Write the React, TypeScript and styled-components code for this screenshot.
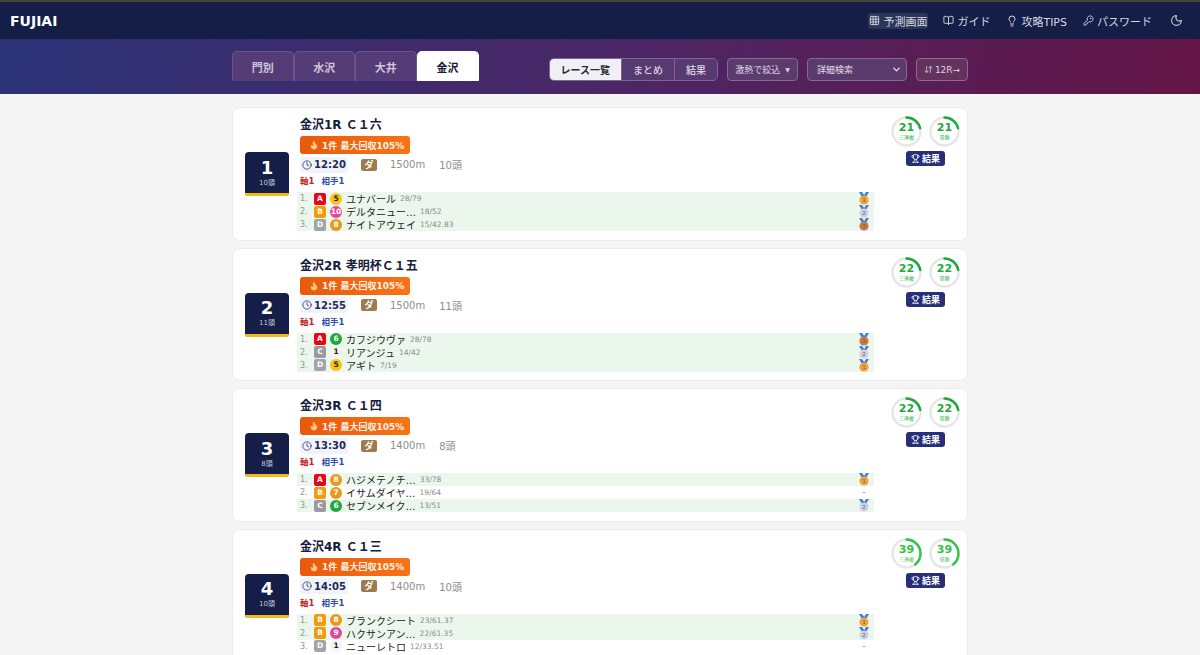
import styled, { createGlobalStyle } from "styled-components";
import { ArrowDownUp, BookOpen, ChevronDown, Clock, Flame, Grid3x3, KeyRound, Lightbulb, Moon, Trophy } from "lucide-react";

const FONT = `"DejaVu Sans", "Noto Sans CJK JP", sans-serif`;

const GlobalStyle = createGlobalStyle`
  html, body {
    margin: 0;
    height: 655px;
    overflow: hidden;
    background: #f5f5f5;
    font-family: ${FONT};
  }
`;

interface Entry {
  no: number;
  rank: string;
  gate: number;
  name: string;
  stat: string;
  medal?: number;
}

interface Race {
  no: number;
  title: string;
  time: string;
  distance: string;
  heads: number;
  score: number;
  entries: Entry[];
}

const races: Race[] = [
  {
    no: 1,
    title: "金沢1R Ｃ１六",
    time: "12:20",
    distance: "1500m",
    heads: 10,
    score: 21,
    entries: [
      { no: 1, rank: "A", gate: 5, name: "ユナバール", stat: "28/79", medal: 1 },
      { no: 2, rank: "B", gate: 10, name: "デルタニュー…", stat: "18/52", medal: 2 },
      { no: 3, rank: "D", gate: 8, name: "ナイトアウェイ", stat: "15/42.83", medal: 3 },
    ],
  },
  {
    no: 2,
    title: "金沢2R 孝明杯Ｃ１五",
    time: "12:55",
    distance: "1500m",
    heads: 11,
    score: 22,
    entries: [
      { no: 1, rank: "A", gate: 6, name: "カフジウヴァ", stat: "28/78", medal: 3 },
      { no: 2, rank: "C", gate: 1, name: "リアンジュ", stat: "14/42", medal: 2 },
      { no: 3, rank: "D", gate: 5, name: "アギト", stat: "7/19", medal: 1 },
    ],
  },
  {
    no: 3,
    title: "金沢3R Ｃ１四",
    time: "13:30",
    distance: "1400m",
    heads: 8,
    score: 22,
    entries: [
      { no: 1, rank: "A", gate: 8, name: "ハジメテノチ…", stat: "33/78", medal: 1 },
      { no: 2, rank: "B", gate: 7, name: "イサムダイヤ…", stat: "19/64" },
      { no: 3, rank: "C", gate: 6, name: "セブンメイク…", stat: "13/51", medal: 2 },
    ],
  },
  {
    no: 4,
    title: "金沢4R Ｃ１三",
    time: "14:05",
    distance: "1400m",
    heads: 10,
    score: 39,
    entries: [
      { no: 1, rank: "B", gate: 8, name: "ブランクシート", stat: "23/61.37", medal: 1 },
      { no: 2, rank: "B", gate: 9, name: "ハクサンアン…", stat: "22/61.35", medal: 2 },
      { no: 3, rank: "D", gate: 1, name: "ニューレトロ", stat: "12/33.51" },
    ],
  },
];

const RANK_COLORS: Record<string, string> = {
  A: "#e8071a",
  B: "#f59a0c",
  C: "#9a9a9e",
  D: "#a3a3a8",
};

const GATE_COLORS: Record<number, [string, string]> = {
  1: ["#f4f4f4", "#222"],
  5: ["#f5c518", "#222"],
  6: ["#1fa83c", "#fff"],
  7: ["#e8981a", "#fff"],
  8: ["#e8981a", "#fff"],
  9: ["#e0489a", "#fff"],
  10: ["#e0489a", "#fff"],
};

const MEDAL_COLORS: Record<number, string> = {
  1: "#f2a33a",
  2: "#cfcfe8",
  3: "#c67a45",
};

const Medal = ({ rank }: { rank: number }) => (
  <svg width="10" height="13" viewBox="0 0 10 13">
    <path d="M0 0 L3 0 L5.2 3 L7 0 L10 0 L7 5 L3 5 Z" fill="#3f7fd6" />
    <circle cx="5" cy="8" r="4.6" fill={MEDAL_COLORS[rank]} />
    <text x="5" y="10" fontSize="5.5" textAnchor="middle" fill="#6b5a4a">
      {rank}
    </text>
  </svg>
);

const Gauge = ({ value, label }: { value: number; label: string }) => {
  const radius = 14;
  const length = 2 * Math.PI * radius;
  const color = value >= 30 ? "#34c23f" : "#1ea83a";
  return (
    <GaugeBox>
      <svg width="31" height="31" viewBox="0 0 31 31">
        <circle cx="15.5" cy="15.5" r={radius} fill="none" stroke="#e6e6e6" strokeWidth="2.4" />
        <circle
          cx="15.5"
          cy="15.5"
          r={radius}
          fill="none"
          stroke={color}
          strokeWidth="2.4"
          strokeLinecap="round"
          strokeDasharray={`${(length * value) / 100} ${length}`}
          transform="rotate(-90 15.5 15.5)"
        />
      </svg>
      <GaugeValue $color={color}>{value}</GaugeValue>
      <GaugeLabel $color={color}>{label}</GaugeLabel>
    </GaugeBox>
  );
};

const RaceCard = ({ race }: { race: Race }) => (
  <Card>
    <NumberBlock>
      <NumberValue>{race.no}</NumberValue>
      <NumberHeads>{race.heads}頭</NumberHeads>
    </NumberBlock>
    <Main>
      <Title>{race.title}</Title>
      <Banner>
        <Flame size={10} fill="#ffd08a" stroke="#ffb266" />
        <span>1件 最大回収105%</span>
      </Banner>
      <InfoRow>
        <TimePill>
          <Clock size={10} strokeWidth={1.8} />
          {race.time}
        </TimePill>
        <Surface>ダ</Surface>
        <Meta>{race.distance}</Meta>
        <Meta>{race.heads}頭</Meta>
      </InfoRow>
      <Bets>
        <Axis>軸1</Axis>
        <Partner>相手1</Partner>
      </Bets>
      <Entries>
        {race.entries.map((entry) => (
          <EntryRow key={entry.no} $hit={entry.medal !== undefined}>
            <EntryNo>{entry.no}.</EntryNo>
            <Rank $color={RANK_COLORS[entry.rank]}>{entry.rank}</Rank>
            <GateBall $bg={GATE_COLORS[entry.gate][0]} $fg={GATE_COLORS[entry.gate][1]}>
              {entry.gate}
            </GateBall>
            <HorseName>{entry.name}</HorseName>
            <Stat>{entry.stat}</Stat>
            <MedalSlot>{entry.medal ? <Medal rank={entry.medal} /> : "-"}</MedalSlot>
          </EntryRow>
        ))}
      </Entries>
    </Main>
    <Side>
      <Gauges>
        <Gauge value={race.score} label="三連複" />
        <Gauge value={race.score} label="単勝" />
      </Gauges>
      <ResultButton>
        <Trophy size={9} strokeWidth={2.2} />
        結果
      </ResultButton>
    </Side>
  </Card>
);

export default function App() {
  return (
    <>
      <GlobalStyle />
      <TopBar>
        <Logo>FUJIAI</Logo>
        <Nav>
          <NavItem $active>
            <Grid3x3 size={11} />
            予測画面
          </NavItem>
          <NavItem>
            <BookOpen size={11} />
            ガイド
          </NavItem>
          <NavItem>
            <Lightbulb size={12} />
            攻略TIPS
          </NavItem>
          <NavItem>
            <KeyRound size={11} />
            パスワード
          </NavItem>
          <ThemeButton>
            <Moon size={13} />
          </ThemeButton>
        </Nav>
      </TopBar>
      <Hero>
        <HeroInner>
          <Tabs>
            <Tab>門別</Tab>
            <Tab>水沢</Tab>
            <Tab>大井</Tab>
            <Tab $active>金沢</Tab>
          </Tabs>
          <Controls>
            <Segments>
              <Segment $active>レース一覧</Segment>
              <Segment>まとめ</Segment>
              <Segment>結果</Segment>
            </Segments>
            <FilterButton>
              激熱で絞込 <small>▼</small>
            </FilterButton>
            <SearchSelect>
              詳細検索
              <ChevronDown size={11} strokeWidth={3} />
            </SearchSelect>
            <SortButton>
              <ArrowDownUp size={9} />
              12R→
            </SortButton>
          </Controls>
        </HeroInner>
      </Hero>
      <List>
        {races.map((race) => (
          <RaceCard key={race.no} race={race} />
        ))}
      </List>
    </>
  );
}

const TopBar = styled.header`
  box-sizing: border-box;
  height: 39px;
  border-top: 2px solid #45453f;
  background: #141e46;
  display: flex;
  align-items: center;
  justify-content: space-between;
  padding: 0 17px 0 10px;
`;

const Logo = styled.div`
  color: #fff;
  font-size: 14px;
  font-weight: 700;
`;

const Nav = styled.nav`
  display: flex;
  align-items: center;
  gap: 14px;
`;

const NavItem = styled.a<{ $active?: boolean }>`
  display: flex;
  align-items: center;
  gap: 3px;
  font-size: 11px;
  height: 16px;
  padding: 0 1px;
  border-radius: 3px;
  color: #d5d8e4;
  background: ${(p) => (p.$active ? "#2c3658" : "transparent")};
`;

const ThemeButton = styled.span`
  display: flex;
  color: #c9ccd8;
  margin-left: 3px;
`;

const Hero = styled.div`
  height: 55px;
  background: linear-gradient(100deg, #2b3377 0%, #4a2766 50%, #641546 100%);
`;

const HeroInner = styled.div`
  box-sizing: border-box;
  width: 736px;
  height: 100%;
  margin: 0 auto;
  padding-top: 12px;
  display: flex;
  justify-content: space-between;
  border-top: 0;
`;

const Tabs = styled.div`
  display: flex;
`;

const Tab = styled.button<{ $active?: boolean }>`
  width: ${(p) => (p.$active ? "62px" : "61.5px")};
  height: 30px;
  padding: 0;
  font: 700 11px ${FONT};
  border-radius: 5px 5px 0 0;
  border: 1px solid ${(p) => (p.$active ? "#fff" : "#6c5688")};
  border-bottom: 0;
  background: ${(p) => (p.$active ? "#fff" : "#553c76")};
  color: ${(p) => (p.$active ? "#1a1a2e" : "#cfc6dc")};
`;

const Controls = styled.div`
  display: flex;
  align-items: flex-start;
  padding-top: 7px;
  gap: 9px;
`;

const Segments = styled.div`
  display: flex;
  height: 23px;
  border: 1px solid #7d6594;
  border-radius: 5px;
  overflow: hidden;
  box-sizing: border-box;
`;

const Segment = styled.span<{ $active?: boolean }>`
  display: flex;
  align-items: center;
  padding: 0 11px;
  font-size: 10px;
  font-weight: ${(p) => (p.$active ? 700 : 500)};
  background: ${(p) => (p.$active ? "#f1eff5" : "#573a70")};
  color: ${(p) => (p.$active ? "#2a2a3a" : "#dcd4e4")};
  & + & {
    border-left: 1px solid #7d6594;
  }
`;

const FilterButton = styled.span`
  box-sizing: border-box;
  height: 23px;
  width: 71px;
  display: flex;
  align-items: center;
  justify-content: center;
  gap: 5px;
  font-size: 9px;
  color: #dcd4e4;
  background: #5b3a6c;
  border: 1px solid #836a92;
  border-radius: 4px;
  small {
    font-size: 6px;
  }
`;

const SearchSelect = styled.span`
  box-sizing: border-box;
  height: 23px;
  width: 100px;
  display: flex;
  align-items: center;
  justify-content: space-between;
  padding: 0 4px 0 9px;
  font-size: 9px;
  color: #e6dfea;
  background: #5b3a6c;
  border: 1px solid #836a92;
  border-radius: 4px;
`;

const SortButton = styled.span`
  box-sizing: border-box;
  height: 23px;
  width: 52px;
  display: flex;
  align-items: center;
  justify-content: center;
  gap: 2px;
  font-size: 9px;
  color: #dcd4e4;
  background: #63325f;
  border: 1px solid #906a8c;
  border-radius: 4px;
`;

const List = styled.main`
  width: 736px;
  margin: 13px auto 0;
  display: flex;
  flex-direction: column;
  gap: 7px;
`;

const Card = styled.article`
  box-sizing: border-box;
  height: 133.5px;
  flex: none;
  background: #fff;
  border: 1px solid #ececec;
  border-radius: 8px;
  padding: 8px 9px 8px 12px;
  display: flex;
  align-items: flex-start;
`;

const NumberBlock = styled.div`
  flex: none;
  box-sizing: border-box;
  width: 44px;
  height: 44px;
  margin: 36px 11px 0 0;
  background: #141e46;
  border-bottom: 3px solid #f5b915;
  border-radius: 4px 4px 2px 2px;
  color: #fff;
  display: flex;
  flex-direction: column;
  align-items: center;
  justify-content: center;
`;

const NumberValue = styled.div`
  font-size: 18px;
  font-weight: 700;
  line-height: 20px;
`;

const NumberHeads = styled.div`
  font-size: 7px;
  line-height: 10px;
  color: #c5c8d5;
`;

const Main = styled.div`
  width: 574px;
  flex: none;
`;

const Title = styled.div`
  font-size: 12px;
  font-weight: 700;
  line-height: 18px;
  color: #16203c;
`;

const Banner = styled.div`
  box-sizing: border-box;
  width: 110px;
  height: 18px;
  margin-top: 2px;
  display: flex;
  align-items: center;
  gap: 3px;
  padding-left: 9px;
  font-size: 9px;
  font-weight: 700;
  color: #fff3e6;
  background: linear-gradient(90deg, #e8590c, #f97316);
  border-radius: 3px;
  white-space: nowrap;
`;

const InfoRow = styled.div`
  display: flex;
  align-items: center;
  height: 17px;
  margin-top: 2px;
  font-size: 10px;
`;

const TimePill = styled.div`
  box-sizing: border-box;
  width: 48px;
  height: 16px;
  display: flex;
  align-items: center;
  justify-content: center;
  gap: 2px;
  font-weight: 700;
  color: #1d2a55;
  background: #f0f3fc;
  border-radius: 3px;
`;

const Surface = styled.div`
  width: 16px;
  height: 12px;
  margin: 0 13px;
  line-height: 12px;
  font-size: 9px;
  font-weight: 700;
  text-align: center;
  color: #fff;
  background: #a07a4c;
  border-radius: 2px;
`;

const Meta = styled.div`
  color: #8d8d8d;
  margin-right: 14px;
`;

const Bets = styled.div`
  display: flex;
  gap: 7px;
  font-size: 8.5px;
  font-weight: 700;
  line-height: 12px;
  margin-top: 2px;
`;

const Axis = styled.span`
  color: #c62828;
`;

const Partner = styled.span`
  color: #2f4fa8;
`;

const Entries = styled.div`
  margin: 5px 0 0 -3px;
`;

const EntryRow = styled.div<{ $hit: boolean }>`
  height: 13px;
  display: flex;
  align-items: center;
  padding-left: 3px;
  background: ${(p) => (p.$hit ? "#ebf6ed" : "transparent")};
`;

const EntryNo = styled.span`
  width: 14px;
  font-size: 8px;
  color: #8f9a90;
`;

const Rank = styled.span<{ $color: string }>`
  width: 12px;
  height: 12px;
  line-height: 12px;
  margin-right: 4px;
  text-align: center;
  font-size: 7.5px;
  font-weight: 700;
  color: #fff;
  border-radius: 2px;
  background: ${(p) => p.$color};
`;

const GateBall = styled.span<{ $bg: string; $fg: string }>`
  width: 12px;
  height: 12px;
  line-height: 12px;
  margin-right: 4px;
  text-align: center;
  font-size: 7.5px;
  font-weight: 700;
  border-radius: 50%;
  background: ${(p) => p.$bg};
  color: ${(p) => p.$fg};
`;

const HorseName = styled.span`
  font-size: 10px;
  color: #1c1c1c;
  white-space: nowrap;
`;

const Stat = styled.span`
  font-size: 7.5px;
  color: #8c8c8c;
  margin-left: 4px;
`;

const MedalSlot = styled.span`
  margin-left: auto;
  width: 10px;
  height: 13px;
  margin-right: 5px;
  font-size: 8px;
  line-height: 13px;
  text-align: center;
  color: #777;
`;

const Side = styled.div`
  margin-left: 17px;
  display: flex;
  flex-direction: column;
  align-items: center;
`;

const Gauges = styled.div`
  display: flex;
  gap: 7px;
`;

const GaugeBox = styled.div`
  position: relative;
  width: 31px;
  height: 31px;
`;

const GaugeValue = styled.div<{ $color: string }>`
  position: absolute;
  top: 6px;
  left: 0;
  right: 0;
  text-align: center;
  font-size: 11px;
  font-weight: 700;
  line-height: 12px;
  color: ${(p) => p.$color};
`;

const GaugeLabel = styled.div<{ $color: string }>`
  position: absolute;
  top: 18px;
  left: 0;
  right: 0;
  text-align: center;
  font-size: 5px;
  line-height: 7px;
  color: ${(p) => p.$color};
`;

const ResultButton = styled.div`
  box-sizing: border-box;
  width: 39px;
  height: 15px;
  margin-top: 4px;
  display: flex;
  align-items: center;
  justify-content: center;
  gap: 2px;
  font-size: 9px;
  font-weight: 700;
  color: #fff;
  background: #262f78;
  border-radius: 3px;
`;
